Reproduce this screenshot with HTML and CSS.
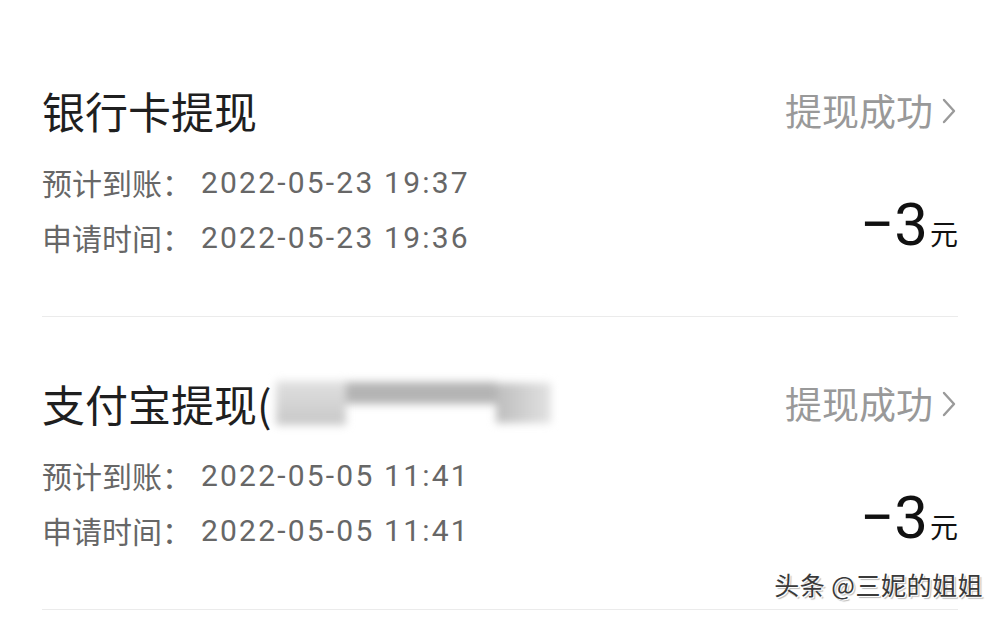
FILE: index.html
```html
<!DOCTYPE html>
<html lang="zh-CN">
<head>
  <meta charset="UTF-8" />
  <title>提现记录</title>
  <meta name="viewport" content="width=device-width, initial-scale=1.0"/>
  <link rel="stylesheet" href="styles.css">
</head>
<body>
  <div class="record-list">
    <div class="record">
      <div class="record-head">
        <div class="record-title">银行卡提现</div>
        <div class="record-status">提现成功
          <svg class="chevron" width="14" height="26" viewBox="0 0 14 26"><polyline points="2,2 12,13 2,24" fill="none" stroke="#9a9a9a" stroke-width="2.4" stroke-linecap="round" stroke-linejoin="round"/></svg>
        </div>
      </div>
      <div class="record-body">
        <div class="record-lines">
          <div class="line"><span class="label">预计到账：</span><span class="date">2022-05-23 19:37</span></div>
          <div class="line"><span class="label">申请时间：</span><span class="date">2022-05-23 19:36</span></div>
        </div>
        <div class="amount">−3<span class="unit">元</span></div>
      </div>
    </div>

    <div class="record">
      <div class="record-head">
        <div class="record-title">支付宝提现(<span class="masked"><span class="mask-a"></span><span class="mask-b"></span><span class="mask-c"></span></span></div>
        <div class="record-status">提现成功
          <svg class="chevron" width="14" height="26" viewBox="0 0 14 26"><polyline points="2,2 12,13 2,24" fill="none" stroke="#9a9a9a" stroke-width="2.4" stroke-linecap="round" stroke-linejoin="round"/></svg>
        </div>
      </div>
      <div class="record-body">
        <div class="record-lines">
          <div class="line"><span class="label">预计到账：</span><span class="date">2022-05-05 11:41</span></div>
          <div class="line"><span class="label">申请时间：</span><span class="date">2022-05-05 11:41</span></div>
        </div>
        <div class="amount">−3<span class="unit">元</span></div>
      </div>
    </div>
  </div>

  <div class="watermark">头条 @三妮的姐姐</div>
</body>
</html>
```

FILE: styles.css
```css
:root {
  --title: #1f1f1f;
  --detail: #676767;
  --status: #999999;
  --divider: #ebebeb;
}
body {
  margin: 0;
  background: #ffffff;
  font-family: "Noto Sans CJK SC", "Noto Sans", sans-serif;
  overflow: hidden;
}
.record-list {
  padding: 24px 42px 0;
}
.record {
  height: 293px;
  padding-top: 60px;
  box-sizing: border-box;
  border-bottom: 1px solid var(--divider);
}
.record-head {
  display: flex;
  justify-content: space-between;
  align-items: center;
  height: 52px;
}
.record-title {
  font-size: 43px;
  line-height: 52px;
  color: var(--title);
  display: flex;
  align-items: center;
}
.record-status {
  font-size: 37px;
  color: var(--status);
  display: flex;
  align-items: center;
  gap: 9px;
  margin-right: 2px;
}
.chevron {
  margin-top: 2px;
}
.masked {
  display: inline-flex;
  align-items: center;
  height: 50px;
  width: 290px;
  margin-left: 4px;
  filter: blur(4px);
}
.mask-a {
  width: 70px;
  height: 44px;
  background: linear-gradient(#e0e0e0, #c8c8c8);
}
.mask-b {
  width: 150px;
  height: 22px;
  align-self: flex-start;
  margin-top: 4px;
  background: #b4b4b4;
}
.mask-c {
  width: 55px;
  height: 40px;
  background: linear-gradient(90deg, #bdbdbd, #e2e2e2);
}
.record-body {
  display: flex;
  justify-content: space-between;
  align-items: flex-end;
  margin-top: 19px;
}
.line {
  font-size: 30px;
  line-height: 55px;
  color: var(--detail);
  display: flex;
}
.label {
  width: 159px;
}
.date {
  font-family: Roboto, "Noto Sans CJK SC", sans-serif;
  letter-spacing: 2.2px;
}
.amount {
  font-family: Roboto, "Noto Sans CJK SC", sans-serif;
  font-size: 60px;
  line-height: 58px;
  color: #111111;
  margin-bottom: 3px;
}
.unit {
  font-family: "Noto Sans CJK SC", sans-serif;
  font-size: 28px;
  margin-left: 2px;
}
.watermark {
  position: absolute;
  right: 17px;
  top: 566px;
  font-size: 25px;
  letter-spacing: 0.5px;
  color: #3a3a3a;
  text-shadow: 1px 1px 0 #ffffff, 2px 2px 1px #bbbbbb;
}
```
